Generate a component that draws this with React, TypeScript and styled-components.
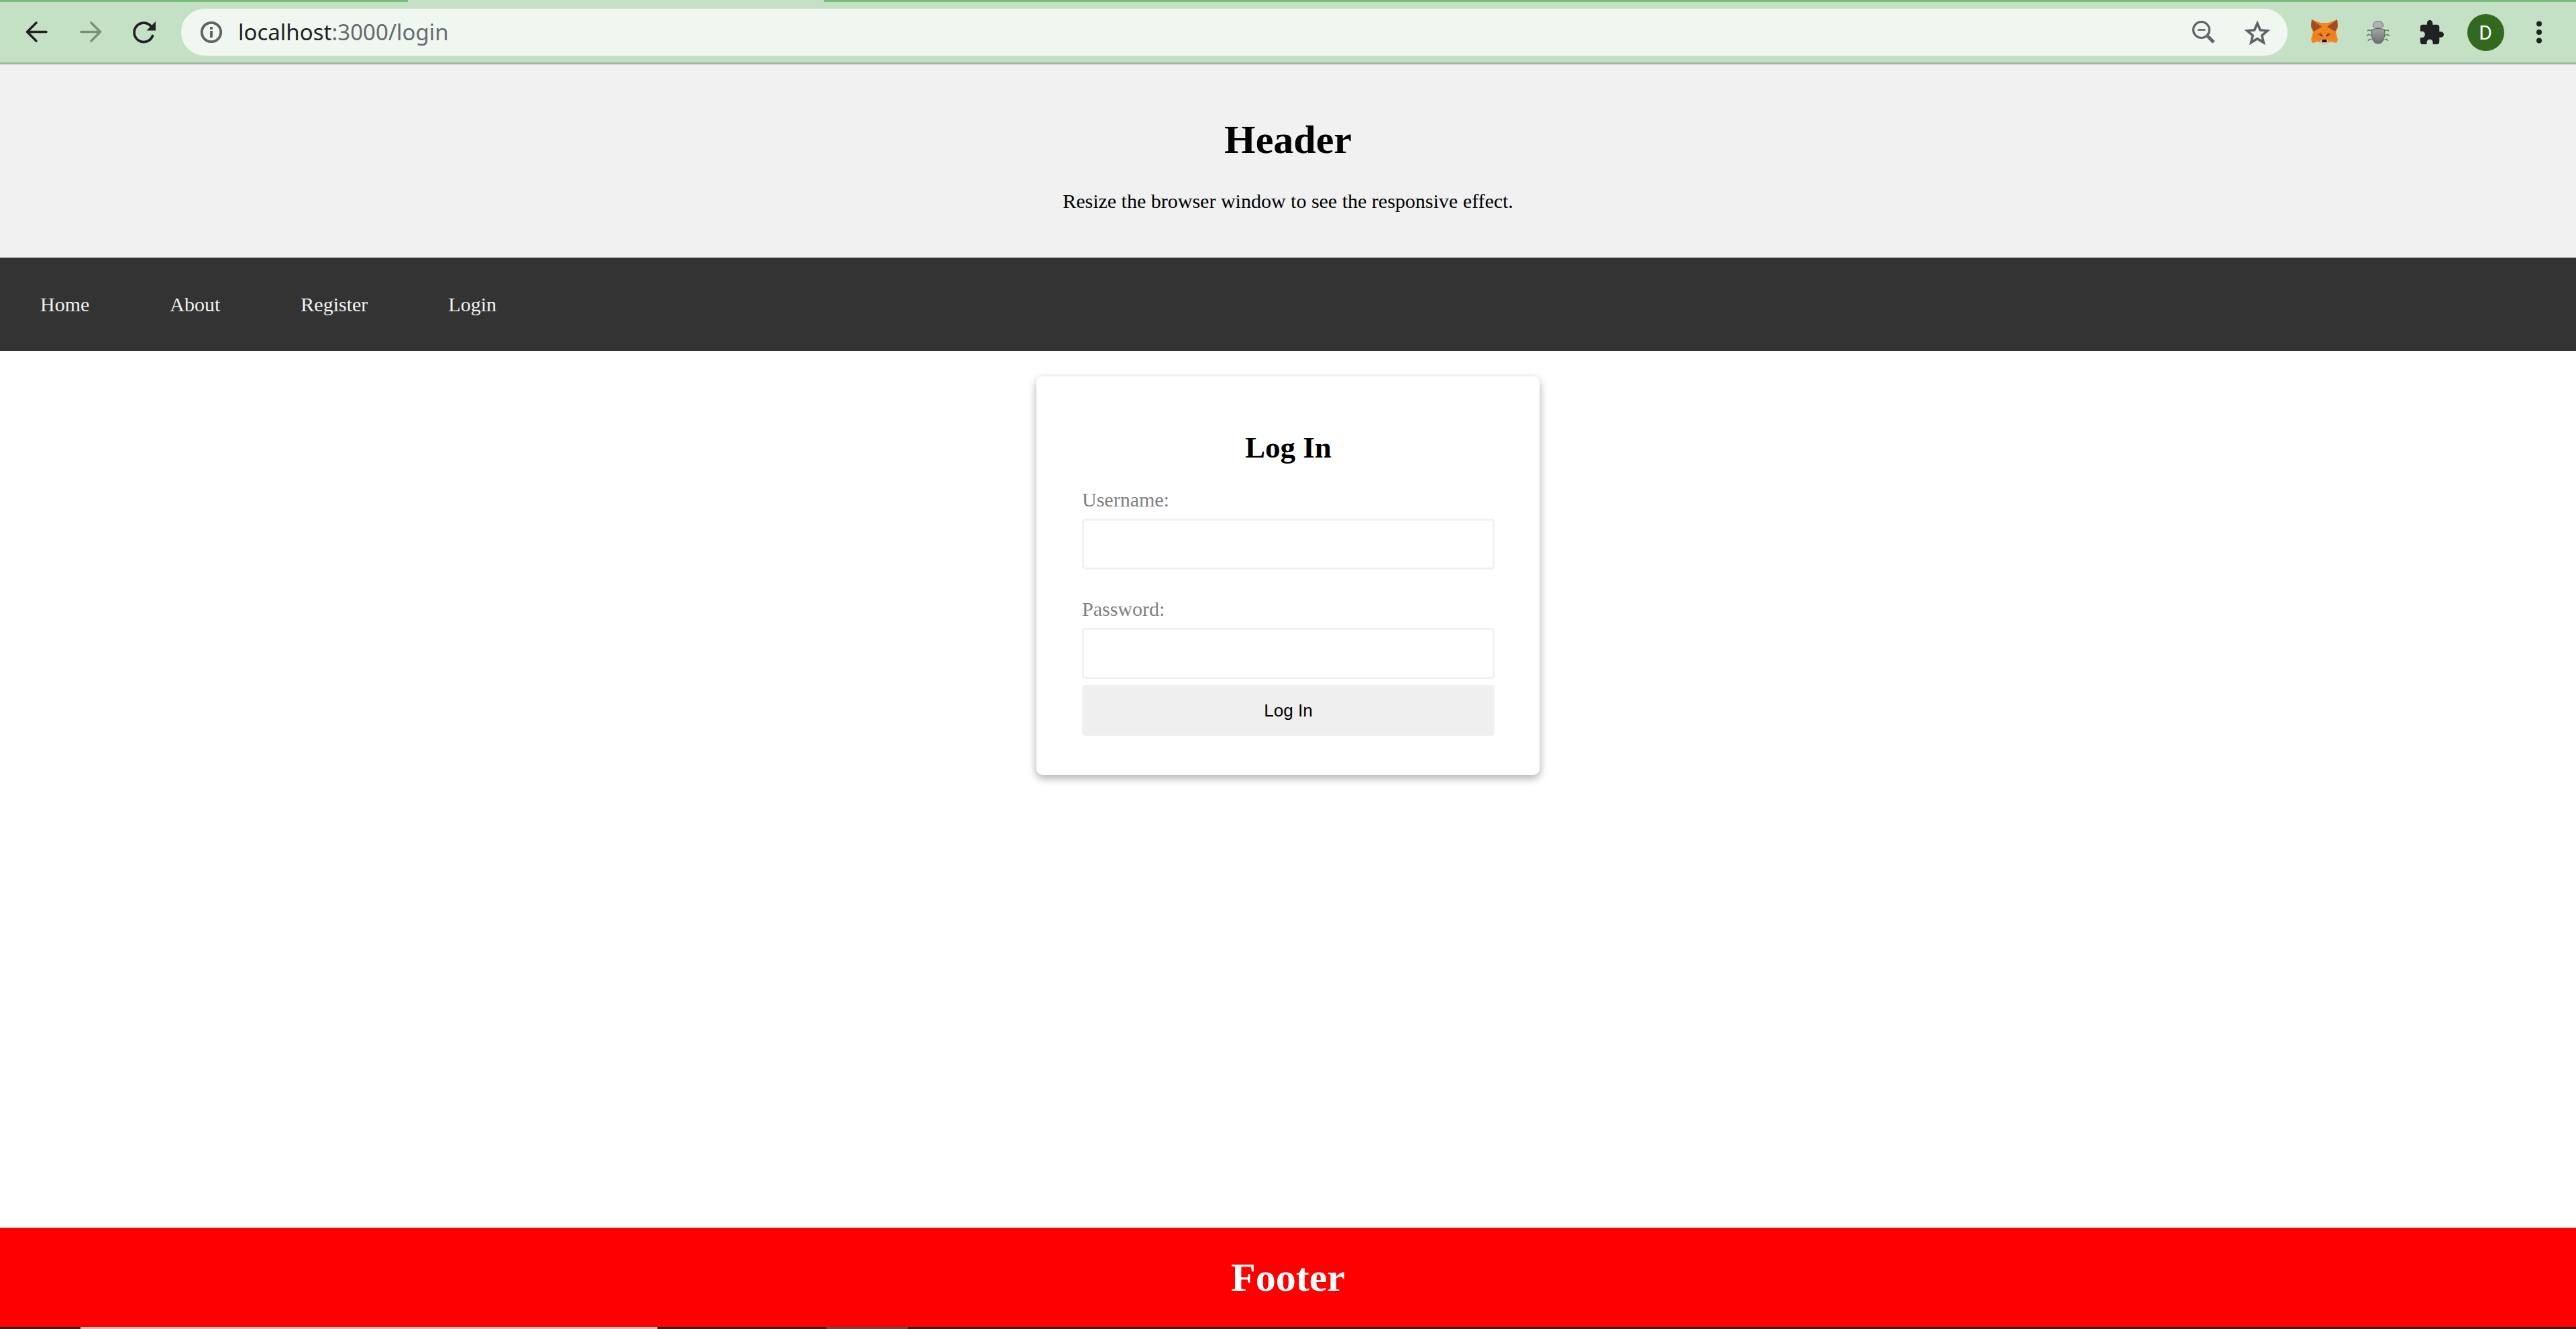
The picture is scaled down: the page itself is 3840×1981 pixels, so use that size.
import React from 'react';
import styled, { createGlobalStyle } from 'styled-components';

const GlobalStyle = createGlobalStyle`
  *, *::before, *::after { box-sizing: border-box; }
  html, body, #root { height: 100%; }
  body {
    margin: 0;
    background: #fff;
    color: #000;
    font-family: "Liberation Serif", "Times New Roman", serif;
    font-size: 30px;
    line-height: 34px;
  }
`;

const Window = styled.div`
  display: flex;
  flex-direction: column;
  min-height: 100%;
`;

const TabStrip = styled.div`
  display: grid;
  grid-template-columns: 608px 620px 1fr;
  height: 3px;
  background: #c5e1c5;
`;

const InactiveTabs = styled.div<{ $column: number }>`
  grid-column: ${(p) => p.$column};
  background: #78bd7c;
`;

const Toolbar = styled.header`
  display: flex;
  align-items: center;
  padding: 10px 15px;
  background: #c5e1c5;
  border-bottom: 3px solid #9fb69f;
`;

const tones = {
  dark: '#202124',
  faded: '#7c8f7e',
  grey: '#5f6368',
};

const ToolButton = styled.button<{ $tone?: keyof typeof tones }>`
  display: flex;
  flex: none;
  align-items: center;
  justify-content: center;
  width: 80px;
  height: 70px;
  padding: 0;
  border: 0;
  background: transparent;
  color: ${(p) => tones[p.$tone ?? 'dark']};

  svg { display: block; overflow: visible; }
`;

const AddressBar = styled.div`
  display: flex;
  flex: 1;
  align-items: center;
  height: 70px;
  margin: 0 15px;
  padding: 0 5px 0 29px;
  border-radius: 35px;
  background: #f0f7f0;
  color: #5f6368;

  svg { display: block; flex: none; }
`;

const Address = styled.div`
  flex: 1;
  padding-left: 24px;
  font-family: "Noto Sans", "Open Sans", sans-serif;
  font-size: 33px;
  line-height: 46px;
  color: #666a6d;

  span { color: #202124; }
`;

const Avatar = styled.span`
  display: flex;
  align-items: center;
  justify-content: center;
  width: 55px;
  height: 55px;
  border-radius: 50%;
  background: #33691e;
  color: #fff;
  font-family: Roboto, sans-serif;
  font-size: 30px;
`;

const Banner = styled.div`
  padding: 38px 38px 37px;
  background: #f1f1f1;
  text-align: center;

  p { margin: 30px 0; }
`;

const Title = styled.h1`
  margin: 40px 0;
  font-size: 60px;
  line-height: 69px;
`;

const Menu = styled.nav`
  display: flex;
  background: #333;
`;

const MenuLink = styled.a`
  padding: 53px 60px 52px;
  color: #f2f2f2;
  text-decoration: none;
`;

const Main = styled.main`
  flex: 1;
  padding: 38px 20px;
`;

const Card = styled.form`
  width: 100%;
  max-width: 750px;
  margin: 0 auto;
  padding: 75px 67px 58px 68px;
  border-radius: 9px;
  background: #fff;
  box-shadow: 0 5px 13px rgba(0, 0, 0, 0.33);
`;

const CardTitle = styled.h2`
  margin: 0 0 30px;
  font-size: 45px;
  line-height: 62px;
  text-align: center;
`;

const Field = styled.div`
  display: flex;
  flex-direction: column;
  gap: 11px;
  margin-bottom: 42px;

  &:last-of-type { margin-bottom: 9px; }
`;

const Label = styled.label`
  color: #808080;
`;

const TextInput = styled.input`
  width: 100%;
  height: 76px;
  padding: 0 18px;
  border: 3px solid #f1f1f1;
  border-radius: 5px;
  background: #fff;
  font: inherit;
`;

const Submit = styled.button`
  display: block;
  width: 100%;
  height: 76px;
  border: 3px solid #f1f1f1;
  border-radius: 5px;
  background: #efefef;
  color: #000;
  font-family: "Liberation Sans", Arial, sans-serif;
  font-size: 26px;
`;

const Footer = styled.footer`
  display: flex;
  align-items: center;
  justify-content: center;
  height: 148px;
  background: #f00;
  color: #fff;
`;

const Taskbar = styled.div`
  display: grid;
  grid-template-columns: 120px 860px 252px 121px 1fr;
  height: 3px;
  background: #2c241f;
`;

const TaskItem = styled.div<{ $column: number; $color: string }>`
  grid-column: ${(p) => p.$column};
  background: ${(p) => p.$color};
`;

const Arrow = ({ flip }: { flip?: boolean }) => (
  <svg width="32" height="32" viewBox="0 0 32 32" fill="none" stroke="currentColor" strokeWidth="3.6" strokeLinecap="round" strokeLinejoin="round">
    <path d={flip ? 'M2 15.500h28M17 2l13.500 13.500L17 29' : 'M30 15.500H2M15 2L1.500 15.500 15 29'} />
  </svg>
);

const Reload = () => (
  <svg width="34" height="32" viewBox="0 0 34 32">
    <path d="M29.500 21.500A14.200 14.200 0 1 1 27 7" fill="none" stroke="currentColor" strokeWidth="3.8" strokeLinecap="round" />
    <path d="M34 0v13.500H20.500z" fill="currentColor" />
  </svg>
);

const Info = () => (
  <svg width="32" height="32" viewBox="0 0 32 32">
    <circle cx="16" cy="16" r="14.200" fill="none" stroke="currentColor" strokeWidth="3.8" />
    <path d="M14 8h4v4h-4zM14 14h4v10h-4z" fill="currentColor" />
  </svg>
);

const ZoomOut = () => (
  <svg width="34" height="34" viewBox="0 0 34 34" fill="none" stroke="currentColor">
    <circle cx="13.500" cy="13.500" r="12" strokeWidth="3.2" />
    <path d="M23 23l9 9" strokeWidth="5" />
    <path d="M8 13.500h11.500" strokeWidth="2.600" />
  </svg>
);

const Star = () => (
  <svg width="38" height="36" viewBox="0 0 38 36">
    <path d="M19 4.800l4.300 10 10.700 1-8.200 7.100 2.500 10.500L19 27.700l-9.300 5.700 2.500-10.500L4 15.800l10.700-1z" fill="none" stroke="currentColor" strokeWidth="3.600" />
  </svg>
);

const Fox = () => (
  <svg width="40" height="38" viewBox="0 0 40 38">
    <path d="M1 0l13 5h12L39 0l1 12-3 7 3 11-2 5-9-2-5 3h-8l-5-3-9 2-2-5 3-11-3-7z" fill="#f5841f" />
    <path d="M1 0l15 11L4 18 0 10zM39 0L24 11l12 7 4-8z" fill="#9c4f22" />
    <path d="M3 19l11 3 2 12-4-1-7-6zM37 19l-11 3-2 12 4-1 7-6z" fill="#f0801f" />
    <path d="M9 22l6-3 2 6zM31 22l-6-3-2 6z" fill="#cf6420" />
    <path d="M12 22l5 1v3zM28 22l-5 1v3z" fill="#253445" />
    <path d="M13 33l3-3h8l3 3-4 5h-6z" fill="#d9c5b5" />
    <path d="M17 30h6l1 4h-8z" fill="#111" />
  </svg>
);

const Bug = () => (
  <svg width="36" height="36" viewBox="0 0 36 38">
    <defs>
      <linearGradient id="shell" x1="0" y1="0" x2="0" y2="1">
        <stop offset="0" stopColor="#a6a6a6" />
        <stop offset="1" stopColor="#6d6d6d" />
      </linearGradient>
    </defs>
    <path d="M7 17l-3-1.500-3 1.500M7 24l-4-1.500L0 25M8 31l-3-1-3 2.500M29 17l3-1.500 3 1.500M29 24l4-1.500 3 2.500M28 31l3-1 3 2.500" fill="none" stroke="#66716a" strokeWidth="1.600" />
    <path d="M10 10C10 4 13 1.500 18 1.500S26 4 26 10q-8 3-16 0z" fill="#b3b1b5" stroke="#808580" strokeWidth="1.200" />
    <path d="M8 15q10-4 20 0c1.500 9-1 22-10 22S6.500 24 8 15z" fill="url(#shell)" stroke="#616561" strokeWidth="1.200" />
  </svg>
);

const Puzzle = () => (
  <svg width="36" height="36" viewBox="1.500 1 21.500 21" preserveAspectRatio="none">
    <path d="M20.500 11H19V7c0-1.100-.9-2-2-2h-4V3.500a2.500 2.500 0 0 0-5 0V5H4c-1.100 0-1.990.9-1.990 2v3.800H3.500c1.490 0 2.700 1.210 2.700 2.700s-1.210 2.700-2.700 2.700H2V20c0 1.100.9 2 2 2h3.800v-1.500c0-1.490 1.210-2.700 2.700-2.700s2.700 1.210 2.700 2.700V22H17c1.100 0 2-.9 2-2v-4h1.500a2.500 2.500 0 0 0 0-5z" fill="currentColor" />
  </svg>
);

const Dots = () => (
  <svg width="8" height="34" viewBox="0 0 8 34" fill="currentColor">
    <circle cx="4" cy="4.500" r="4" />
    <circle cx="4" cy="17" r="4" />
    <circle cx="4" cy="29.500" r="4" />
  </svg>
);

const links = ['Home', 'About', 'Register', 'Login'];

export default function App() {
  return (
    <Window>
      <GlobalStyle />
      <TabStrip>
        <InactiveTabs $column={1} />
        <InactiveTabs $column={3} />
      </TabStrip>
      <Toolbar>
        <ToolButton aria-label="Back"><Arrow /></ToolButton>
        <ToolButton aria-label="Forward" $tone="faded"><Arrow flip /></ToolButton>
        <ToolButton aria-label="Reload"><Reload /></ToolButton>
        <AddressBar>
          <Info />
          <Address><span>localhost</span>:3000/login</Address>
          <ToolButton aria-label="Zoom out" $tone="grey"><ZoomOut /></ToolButton>
          <ToolButton aria-label="Bookmark" $tone="grey"><Star /></ToolButton>
        </AddressBar>
        <ToolButton aria-label="Wallet"><Fox /></ToolButton>
        <ToolButton aria-label="Debugger"><Bug /></ToolButton>
        <ToolButton aria-label="Extensions"><Puzzle /></ToolButton>
        <ToolButton aria-label="Profile"><Avatar>D</Avatar></ToolButton>
        <ToolButton aria-label="Menu"><Dots /></ToolButton>
      </Toolbar>
      <Banner>
        <Title>Header</Title>
        <p>Resize the browser window to see the responsive effect.</p>
      </Banner>
      <Menu>
        {links.map((name) => (
          <MenuLink key={name} href={`#${name.toLowerCase()}`}>{name}</MenuLink>
        ))}
      </Menu>
      <Main>
        <Card onSubmit={(e) => e.preventDefault()}>
          <CardTitle>Log In</CardTitle>
          <Field>
            <Label htmlFor="username">Username:</Label>
            <TextInput id="username" type="text" />
          </Field>
          <Field>
            <Label htmlFor="password">Password:</Label>
            <TextInput id="password" type="password" />
          </Field>
          <Submit type="submit">Log In</Submit>
        </Card>
      </Main>
      <Footer>
        <Title>Footer</Title>
      </Footer>
      <Taskbar>
        <TaskItem $column={2} $color="#c2c2c2" />
        <TaskItem $column={4} $color="#55534b" />
      </Taskbar>
    </Window>
  );
}
